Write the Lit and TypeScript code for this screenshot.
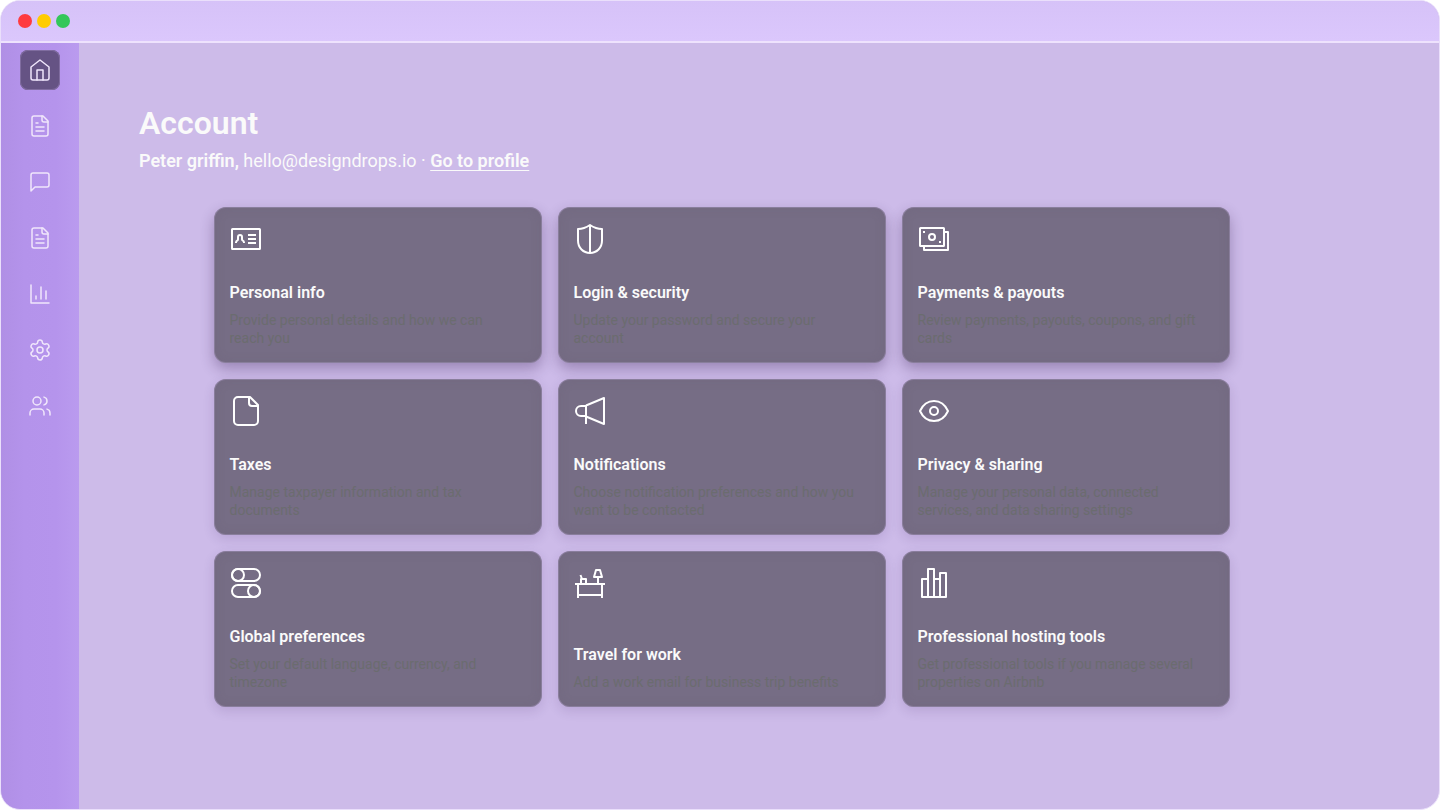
import { LitElement, css, html, svg } from 'lit'
import type { SVGTemplateResult } from 'lit'
import { customElement, property } from 'lit/decorators.js'
import { classMap } from 'lit/directives/class-map.js'

const fileText = svg`
  <path d="M15 2H6a2 2 0 0 0-2 2v16a2 2 0 0 0 2 2h12a2 2 0 0 0 2-2V7z" />
  <path d="M14 2v4a2 2 0 0 0 2 2h4" />
  <path d="M8 9h2M8 13h8M8 17h8" />
`

const navItems = [
  {
    label: 'Home',
    icon: svg`
      <path d="M3 9l9-7 9 7v11a2 2 0 0 1-2 2H5a2 2 0 0 1-2-2z" />
      <path d="M9 22V12h6v10" />
    `,
  },
  { label: 'Documents', icon: fileText },
  {
    label: 'Messages',
    icon: svg`<path d="M21 15a2 2 0 0 1-2 2H7l-4 4V5a2 2 0 0 1 2-2h14a2 2 0 0 1 2 2z" />`,
  },
  { label: 'Reports', icon: fileText },
  {
    label: 'Statistics',
    icon: svg`<path d="M3 3v18h18M8 17v-3M13 17V5M18 17V9" />`,
  },
  {
    label: 'Settings',
    icon: svg`
      <path d="M9.671 4.136a2.34 2.34 0 0 1 4.659 0 2.34 2.34 0 0 0 3.319 1.915 2.34 2.34 0 0 1 2.33 4.033 2.34 2.34 0 0 0 0 3.831 2.34 2.34 0 0 1-2.33 4.033 2.34 2.34 0 0 0-3.319 1.915 2.34 2.34 0 0 1-4.659 0 2.34 2.34 0 0 0-3.32-1.915 2.34 2.34 0 0 1-2.33-4.033 2.34 2.34 0 0 0 0-3.831A2.34 2.34 0 0 1 6.35 6.051a2.34 2.34 0 0 0 3.319-1.915" />
      <circle cx="12" cy="12" r="3" />
    `,
  },
  {
    label: 'People',
    icon: svg`
      <path d="M16 21v-2a4 4 0 0 0-4-4H6a4 4 0 0 0-4 4v2" />
      <circle cx="9" cy="7" r="4" />
      <path d="M22 21v-2a4 4 0 0 0-3-3.870M16 3.130a4 4 0 0 1 0 7.750" />
    `,
  },
]

const cards = [
  {
    title: 'Personal info',
    text: 'Provide personal details and how we can reach you',
    icon: svg`
      <rect x="2" y="6" width="28" height="20" rx="0.5" />
      <path d="M6 20v-.5c0-1 .6-1.700 1.500-2.200.4-.2.500-.5.500-1V14a2 2 0 0 1 4 0v2.300c0 .5.100.8.500 1 .9.500 1.500 1.200 1.500 2.200v.5" />
      <path d="M18 12h8M18 16h8M18 20h8" />
    `,
  },
  {
    title: 'Login & security',
    text: 'Update your password and secure your account',
    icon: svg`
      <path d="M16 2C12 4.700 8 6 4 6v11.500C4 25 9.300 30 16 30s12-5 12-12.500V6c-4 0-8-1.300-12-4z" />
      <path d="M16 2v28" />
    `,
  },
  {
    title: 'Payments & payouts',
    text: 'Review payments, payouts, coupons, and gift cards',
    icon: svg`
      <rect x="2" y="5" width="24" height="18" rx="0.5" />
      <path d="M26 9h4v18H6v-4" />
      <circle cx="14" cy="14" r="3" />
      <path d="M5 9h2M21 19h2" />
    `,
  },
  {
    title: 'Taxes',
    text: 'Manage taxpayer information and tax documents',
    icon: svg`
      <path d="M20 2H8a4 4 0 0 0-4 4v20a4 4 0 0 0 4 4h16a4 4 0 0 0 4-4V10z" />
      <path d="M19 2v6a3 3 0 0 0 3 3h6" />
    `,
  },
  {
    title: 'Notifications',
    text: 'Choose notification preferences and how you want to be contacted',
    icon: svg`
      <path d="M12 10.500L30 3v26l-18-7.500" />
      <path d="M12 11H7a5 5 0 0 0 0 10h5M12 10v19" />
    `,
  },
  {
    title: 'Privacy & sharing',
    text: 'Manage your personal data, connected services, and data sharing settings',
    icon: svg`
      <path d="M2 16C5 9.500 10 6 16 6s11 3.500 14 10c-3 6.500-8 10-14 10S5 22.500 2 16z" />
      <circle cx="16" cy="16" r="4" />
    `,
  },
  {
    title: 'Global preferences',
    text: 'Set your default language, currency, and timezone',
    icon: svg`
      <rect x="2" y="2" width="28" height="12" rx="6" />
      <circle cx="8" cy="8" r="6" />
      <rect x="2" y="18" width="28" height="12" rx="6" />
      <circle cx="24" cy="24" r="6" />
    `,
  },
  {
    title: 'Travel for work',
    text: 'Add a work email for business trip benefits',
    icon: svg`
      <path d="M1 17h30M4 17v14M28 17v14M4 28h24" />
      <path d="M22 3h4l2 7h-8zM24 10v7" />
      <path d="M7 17v-5h5v5M8 12L6.500 8" />
    `,
  },
  {
    title: 'Professional hosting tools',
    text: 'Get professional tools if you manage several properties on Airbnb',
    icon: svg`
      <path d="M10 12H4v18h24V6h-6v24" />
      <path d="M10 30V2h6v28M16 12h6" />
    `,
  },
]

@customElement('account-card')
export class AccountCard extends LitElement {
  @property({ attribute: false }) icon?: SVGTemplateResult
  @property() heading = ''
  @property() text = ''
  @property({ type: Boolean, reflect: true }) raised = false

  protected render() {
    return html`
      <a class="card" href="#">
        <svg class="icon" viewBox="0 0 32 32" aria-hidden="true">${this.icon}</svg>
        <div class="copy">
          <h2 class="heading">${this.heading}</h2>
          <p class="text">${this.text}</p>
        </div>
      </a>
    `
  }

  static styles = css`
    :host {
      display: flex;
      border-radius: 12px;
      box-shadow: 0 4px 12px rgba(60, 30, 90, 0.14);
    }

    :host([raised]) {
      box-shadow: 0 6px 14px rgba(50, 25, 75, 0.32);
    }

    .card {
      flex: 1;
      box-sizing: border-box;
      min-height: 156px;
      padding: 16px;
      display: flex;
      flex-direction: column;
      justify-content: space-between;
      gap: 12px;
      color: #fafafa;
      text-decoration: none;
      background: #766d85;
      border-radius: 12px;
      box-shadow: inset 0 0 0 1px rgba(170, 155, 195, 0.4),
        inset 0 0 12px rgba(90, 75, 100, 0.14);
    }

    .icon {
      width: 32px;
      height: 32px;
      fill: none;
      stroke: #fff;
      stroke-width: 2;
      stroke-linejoin: round;
    }

    .copy {
      display: flex;
      flex-direction: column;
      gap: 8px;
    }

    .heading {
      margin: 0;
      font-size: 16px;
      font-weight: 600;
      line-height: 20px;
    }

    .text {
      margin: 0;
      padding-right: 8px;
      font-size: 14px;
      line-height: 18px;
      color: #6b6c6f;
    }
  `
}

@customElement('app-root')
export class AppRoot extends LitElement {
  protected render() {
    return html`
      <div class="window">
        <header class="titlebar">
          <span class="dot red"></span>
          <span class="dot yellow"></span>
          <span class="dot green"></span>
        </header>
        <div class="body">
          <nav class="sidebar">
            ${navItems.map(
              (item, i) => html`
                <button
                  class=${classMap({ 'nav-button': true, active: i === 0 })}
                  aria-label=${item.label}
                >
                  <svg class="nav-icon" viewBox="0 0 24 24" aria-hidden="true">
                    ${item.icon}
                  </svg>
                </button>
              `
            )}
          </nav>
          <main class="content">
            <h1 class="title">Account</h1>
            <p class="subtitle">
              <strong>Peter griffin,</strong> hello@designdrops.io ·
              <a class="profile" href="#">Go to profile</a>
            </p>
            <section class="grid">
              ${cards.map(
                (card, i) => html`
                  <account-card
                    .icon=${card.icon}
                    .heading=${card.title}
                    .text=${card.text}
                    ?raised=${i < 3}
                  ></account-card>
                `
              )}
            </section>
          </main>
        </div>
      </div>
    `
  }

  static styles = css`
    :host {
      display: block;
      font-family: Roboto, 'Liberation Sans', sans-serif;
      background: #fff;
    }

    .window {
      box-sizing: border-box;
      min-height: 100vh;
      display: flex;
      flex-direction: column;
      overflow: hidden;
      border: 1px solid #eadffb;
      border-radius: 20px;
      background: #cdbbe9;
    }

    .titlebar {
      box-sizing: border-box;
      height: 42px;
      padding: 0 17px;
      display: flex;
      align-items: center;
      gap: 5px;
      background: linear-gradient(#d6c2f8, #dbc7fc);
      border-bottom: 2px solid #eee2fd;
    }

    .dot {
      width: 14px;
      height: 14px;
      border-radius: 50%;
    }

    .red {
      background: #ff3b3f;
    }

    .yellow {
      background: #ffcc00;
    }

    .green {
      background: #34c759;
    }

    .body {
      flex: 1;
      display: flex;
    }

    .sidebar {
      flex: none;
      box-sizing: border-box;
      width: 78px;
      padding: 7px 0;
      display: flex;
      flex-direction: column;
      align-items: center;
      gap: 16px;
      background: linear-gradient(to right, #b08fe5, #b493eb 30%, #b594ec 70%, #ba9bef);
    }

    .nav-button {
      width: 40px;
      height: 40px;
      padding: 0;
      display: flex;
      align-items: center;
      justify-content: center;
      border: 0;
      border-radius: 8px;
      background: none;
    }

    .active {
      background: #655384;
      box-shadow: inset 0 0 0 1px #806da0;
    }

    .nav-icon {
      width: 24px;
      height: 24px;
      fill: none;
      stroke: #f0e6fb;
      stroke-width: 1.5;
      stroke-linecap: round;
      stroke-linejoin: round;
    }

    .content {
      flex: 1;
      padding: 60px 135px 60px 60px;
      color: #fafafa;
    }

    .title {
      margin: 0;
      font-size: 32px;
      font-weight: 600;
      line-height: 40px;
    }

    .subtitle {
      margin: 6px 0 0;
      font-size: 18px;
      line-height: 24px;
    }

    .subtitle strong {
      font-weight: 600;
    }

    .profile {
      color: inherit;
      font-weight: 600;
      text-decoration-thickness: 1px;
      text-decoration-skip-ink: none;
      text-underline-offset: 3px;
    }

    .grid {
      max-width: 1016px;
      margin: 34px auto 0;
      display: grid;
      grid-template-columns: repeat(3, 1fr);
      gap: 16px;
    }
  `
}
